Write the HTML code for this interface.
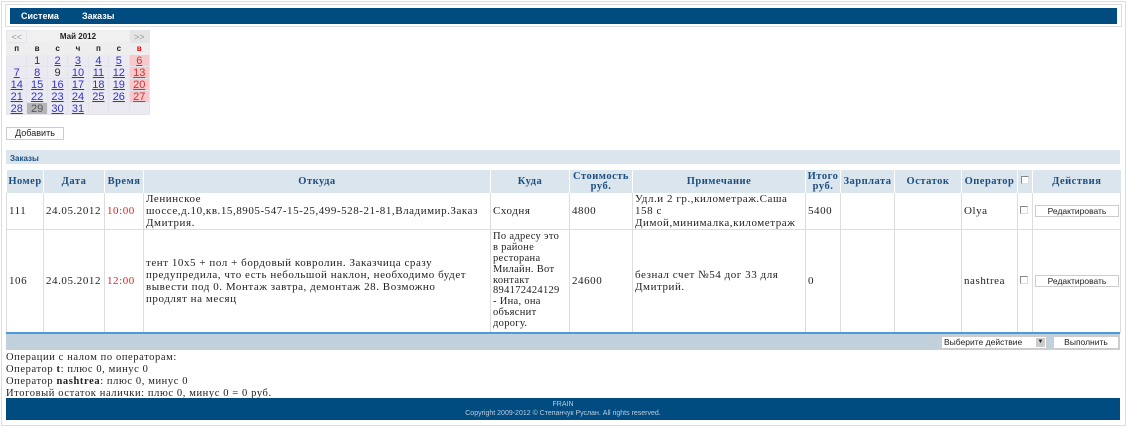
<!DOCTYPE html>
<html><head><meta charset="utf-8"><style>
*{box-sizing:border-box;margin:0;padding:0}
body{width:1127px;height:427px;background:#fff;font-family:"Liberation Serif",serif;font-size:10px;color:#222;position:relative;overflow:hidden}
.frame{position:absolute;left:1px;top:1px;width:1125px;height:425px;border:1px solid #ddd}
.navbox{position:absolute;left:5px;top:4px;width:1117px;height:23px;border:1px solid #ddd}
.nav{position:absolute;left:10px;top:8px;width:1107px;height:16px;background:#004b80;color:#fff;font:bold 9px "Liberation Sans",sans-serif}
.nav span{position:absolute;top:3px}
.cal{position:absolute;left:6px;top:30px;width:144px;height:83px;background:#eee;border-collapse:collapse;font:11px "Liberation Sans",sans-serif;table-layout:fixed}
.cal td{height:12px;text-align:center;padding:0;background:#f0f0f0;border:1px solid #e4e4ec;line-height:10px}
.cal tr.d td{background:#eaeaf0;color:#33c;text-decoration:underline}
.cal tr.d td.s{background:#f7c8cc;color:#c33}
.cal tr.d td.e{text-decoration:none;color:#333}
.cal td.t{background:#b5b5b5!important;color:#555!important}
.cal .w td{font-weight:bold;font-size:8px;background:#eee;border-color:#eee}
.btn{position:absolute;background:#fff;border:1px solid #ccc;font:9px "Liberation Sans",sans-serif;text-align:center;color:#222}
.zh{position:absolute;left:6px;top:150px;width:1114px;height:14px;background:#dbe5ee;color:#1c4f80;font:bold 8px "Liberation Sans",sans-serif;padding:4px 4px}
table.m{position:absolute;left:6px;top:170px;width:1114px;border-collapse:collapse;table-layout:fixed}
.m th{background:#dbe5ee;color:#1c4f80;font-weight:bold;font-size:10.5px;letter-spacing:.5px;height:23px;border-left:1px solid #fff;line-height:10px;padding:0;white-space:nowrap;overflow:hidden}
.m td{border:1px solid #ddd;border-top:none;padding:0 2px;font-size:11px;letter-spacing:.55px;line-height:12px;vertical-align:middle;white-space:nowrap;overflow:hidden}
.r{color:#e02020}
.cb{display:inline-block;width:8px;height:8px;border:1px solid #888;background:#fff;border-right-color:#ddd;border-bottom-color:#ddd}
.bar{position:absolute;left:6px;top:332px;width:1114px;height:18px;background:#c2d0dc;border-top:2px solid #4a9ade}
.info{position:absolute;left:6px;top:352px;font-size:10.5px;letter-spacing:.6px;line-height:12px;color:#222}
.foot{position:absolute;left:6px;top:398px;width:1114px;height:22px;background:#004b80;color:#bcd;font:7px "Liberation Sans",sans-serif;text-align:center;line-height:9px;padding-top:2px}
</style></head><body>
<div class="frame"></div>
<div class="navbox"></div>
<div class="nav"><span style="left:11px">Система</span><span style="left:72px">Заказы</span></div>
<table class="cal">
<tr><td style="color:#999;font-size:9px">&lt;&lt;</td><td colspan="5" style="font-weight:bold;font-size:8px;border-color:#eee">Май 2012</td><td style="color:#999;background:#e4e4e4;font-size:9px">&gt;&gt;</td></tr>
<tr class="w"><td>п</td><td>в</td><td>с</td><td>ч</td><td>п</td><td>с</td><td style="color:#e00">в</td></tr>
<tr class="d"><td class="e"></td><td class="e">1</td><td>2</td><td>3</td><td>4</td><td>5</td><td class="s">6</td></tr>
<tr class="d"><td>7</td><td>8</td><td class="e">9</td><td>10</td><td>11</td><td>12</td><td class="s">13</td></tr>
<tr class="d"><td>14</td><td>15</td><td>16</td><td>17</td><td>18</td><td>19</td><td class="s">20</td></tr>
<tr class="d"><td>21</td><td>22</td><td>23</td><td>24</td><td>25</td><td>26</td><td class="s">27</td></tr>
<tr class="d"><td>28</td><td class="t" style="text-decoration:none">29</td><td>30</td><td>31</td><td class="e"></td><td class="e"></td><td class="e"></td></tr>
</table>
<div class="btn" style="left:6px;top:127px;width:58px;height:13px;line-height:11px">Добавить</div>
<div class="zh">Заказы</div>
<table class="m">
<colgroup><col style="width:37px"><col style="width:61px"><col style="width:39px"><col style="width:347px"><col style="width:79px"><col style="width:63px"><col style="width:173px"><col style="width:35px"><col style="width:54px"><col style="width:67px"><col style="width:56px"><col style="width:15px"><col style="width:88px"></colgroup>
<tr><th>Номер</th><th>Дата</th><th>Время</th><th>Откуда</th><th>Куда</th><th>Стоимость<br>руб.</th><th>Примечание</th><th>Итого<br>руб.</th><th>Зарплата</th><th>Остаток</th><th>Оператор</th><th><span class="cb"></span></th><th>Действия</th></tr>
<tr style="height:36px"><td>111</td><td>24.05.2012</td><td class="r">10:00</td><td>Ленинское<br>шоссе,д.10,кв.15,8905-547-15-25,499-528-21-81,Владимир.Заказ<br>Дмитрия.</td><td>Сходня</td><td>4800</td><td>Удл.и 2 гр.,километраж.Саша<br>158 с<br>Димой,минималка,километраж</td><td>5400</td><td></td><td></td><td>Olya</td><td><span class="cb"></span></td><td><div class="btn" style="position:static;width:84px;height:12px;font-size:8.5px;line-height:10px;letter-spacing:0">Редактировать</div></td></tr>
<tr style="height:103px"><td>106</td><td>24.05.2012</td><td class="r">12:00</td><td>тент 10х5 + пол + бордовый ковролин. Заказчица сразу<br>предупредила, что есть небольшой наклон, необходимо будет<br>вывести под 0. Монтаж завтра, демонтаж 28. Возможно<br>продлят на месяц</td><td style="line-height:10.8px;font-size:10.5px;letter-spacing:.3px">По адресу это<br>в районе<br>ресторана<br>Милайн. Вот<br>контакт<br>894172424129<br>- Ина, она<br>объяснит<br>дорогу.</td><td>24600</td><td>безнал счет №54 дог 33 для<br>Дмитрий.</td><td>0</td><td></td><td></td><td>nashtrea</td><td><span class="cb"></span></td><td><div class="btn" style="position:static;width:84px;height:12px;font-size:8.5px;line-height:10px;letter-spacing:0">Редактировать</div></td></tr>
</table>
<div class="bar"></div>
<div class="btn" style="left:941px;top:336px;width:106px;height:13px;line-height:11px;text-align:left;padding-left:2px;font-size:8.5px">Выберите действие<span style="position:absolute;right:1px;top:1px;width:9px;height:9px;background:#ccc;font-size:6px;line-height:9px;text-align:center">▼</span></div>
<div class="btn" style="left:1053px;top:336px;width:66px;height:13px;line-height:11px;font-size:8.5px">Выполнить</div>
<div class="info">Операции с налом по операторам:<br>Оператор <b>t</b>: плюс 0, минус 0<br>Оператор <b>nashtrea</b>: плюс 0, минус 0<br>Итоговый остаток налички: плюс 0, минус 0 = 0 руб.</div>
<div class="foot">FRAIN<br>Copyright 2009-2012 © Степанчук Руслан. All rights reserved.</div>
</body></html>
